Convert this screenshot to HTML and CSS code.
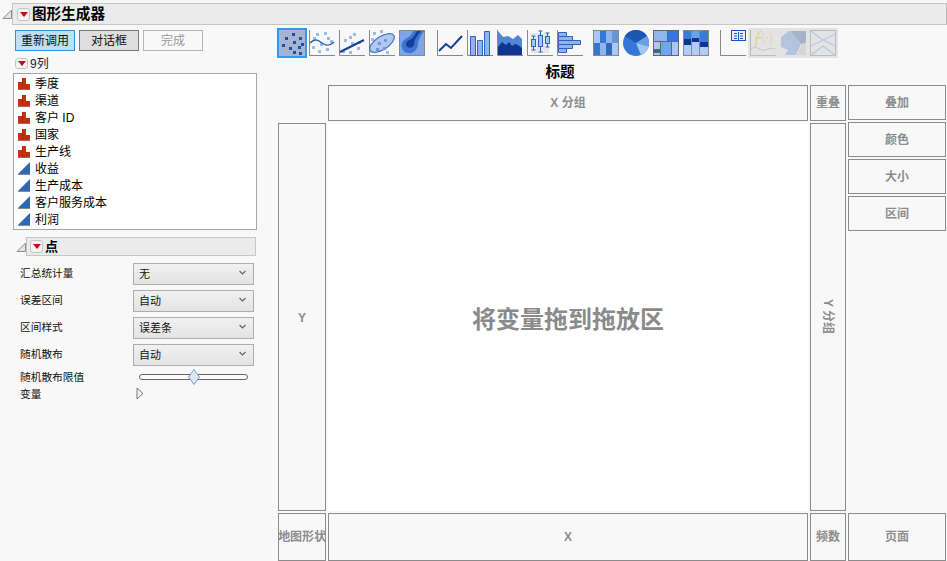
FILE: index.html
```html
<!DOCTYPE html>
<html lang="zh">
<head>
<meta charset="utf-8">
<title>图形生成器</title>
<link rel="stylesheet" href="styles.css">
</head>
<body>
<svg class="defs" width="0" height="0">
  <defs>
    <symbol id="tri-open" viewBox="0 0 10 10"><path d="M1 9.500 9.500 1v8.500z" fill="#e4e4e4" stroke="#8c8c8c"/></symbol>
    <symbol id="nom" viewBox="0 0 12 13"><path d="M0 5h4v7H0zM4 1h4v11H4zM8 7h4v5H8z" fill="#d42a10"/><path d="M4 1h1v11H4zM8 7h1v5H8z" fill="#a82a14"/><path d="M0 12h12v1H0z" fill="#9a6a60"/></symbol>
    <symbol id="con" viewBox="0 0 12 13"><path d="M0 12 12 0v12z" fill="#2f66b5"/><path d="M0 12h12v1H0z" fill="#888"/></symbol>
  </defs>
</svg>
<div class="app">
  <header class="title-row">
    <svg class="disc"><use href="#tri-open"/></svg>
    <div class="title-bar"><span class="menu"></span><span>图形生成器</span></div>
  </header>
  <div class="main">
    <aside class="left">
      <div class="actions">
        <button class="btn on">重新调用</button>
        <button class="btn mid">对话框</button>
        <button class="btn off">完成</button>
      </div>
      <div class="cols-head"><span class="menu small"></span><span>9列</span></div>
      <ul class="list">
        <li><svg class="ti"><use href="#nom"/></svg>季度</li>
        <li><svg class="ti"><use href="#nom"/></svg>渠道</li>
        <li><svg class="ti"><use href="#nom"/></svg>客户 ID</li>
        <li><svg class="ti"><use href="#nom"/></svg>国家</li>
        <li><svg class="ti"><use href="#nom"/></svg>生产线</li>
        <li><svg class="ti"><use href="#con"/></svg>收益</li>
        <li><svg class="ti"><use href="#con"/></svg>生产成本</li>
        <li><svg class="ti"><use href="#con"/></svg>客户服务成本</li>
        <li><svg class="ti"><use href="#con"/></svg>利润</li>
      </ul>
      <div class="points-head">
        <svg class="disc"><use href="#tri-open"/></svg>
        <div class="points-bar"><span class="menu"></span><span>点</span></div>
      </div>
      <div class="opts">
        <div class="opt"><label>汇总统计量</label><div class="sel"><span>无</span><svg class="chev" viewBox="0 0 7 5"><path d="M.5 1 3.500 4 6.500 1" fill="none" stroke="#666" stroke-width="1.200"/></svg></div></div>
        <div class="opt"><label>误差区间</label><div class="sel"><span>自动</span><svg class="chev" viewBox="0 0 7 5"><path d="M.5 1 3.500 4 6.500 1" fill="none" stroke="#666" stroke-width="1.200"/></svg></div></div>
        <div class="opt"><label>区间样式</label><div class="sel"><span>误差条</span><svg class="chev" viewBox="0 0 7 5"><path d="M.5 1 3.500 4 6.500 1" fill="none" stroke="#666" stroke-width="1.200"/></svg></div></div>
        <div class="opt"><label>随机散布</label><div class="sel"><span>自动</span><svg class="chev" viewBox="0 0 7 5"><path d="M.5 1 3.500 4 6.500 1" fill="none" stroke="#666" stroke-width="1.200"/></svg></div></div>
        <div class="opt slider-row"><label>随机散布限值</label><div class="track"><svg class="thumb" viewBox="0 0 12 16"><path d="M6 .5 11.500 8 6 15.500.5 8z" fill="#dbe7f5" stroke="#7f9ab8"/></svg></div></div>
        <div class="opt var-row"><label>变量</label><svg class="expand" viewBox="0 0 8 13"><path d="M1 1 7 6.500 1 12z" fill="#f4f4f4" stroke="#777"/></svg></div>
      </div>
    </aside>
    <section class="right">
      <div class="toolbar">
        <div class="tgroup">
          <button class="tool sel-tool"><svg viewBox="0 0 26 26"><rect width="26" height="26" fill="#a6b4d1"/><g fill="#1e4fb0"><rect x="13" y="3" width="3" height="3"/><rect x="6" y="7" width="3" height="3"/><rect x="20" y="7" width="3" height="3"/><rect x="14" y="11" width="3" height="3"/><rect x="22" y="13" width="3" height="3"/><rect x="3" y="14" width="3" height="3"/><rect x="19" y="16" width="3" height="3"/><rect x="10" y="17" width="3" height="3"/><rect x="14" y="21" width="3" height="3"/><rect x="20" y="22" width="3" height="3"/></g></svg></button>
          <button class="tool"><svg viewBox="0 0 26 26"><path d="M.5 0v25.500H26" fill="none" stroke="#888"/><g fill="#9dbbe8"><rect x="7" y="3" width="3" height="3"/><rect x="15" y="2" width="3" height="3"/><rect x="18" y="7" width="3" height="3"/><rect x="4" y="7" width="3" height="3"/><rect x="21" y="10" width="3" height="3"/><rect x="11" y="13" width="3" height="3"/><rect x="3" y="16" width="3" height="3"/><rect x="9" y="20" width="3" height="3"/><rect x="17" y="18" width="3" height="3"/></g><path d="M1 13c5-5 8-3 12 0s8 3 12-1" fill="none" stroke="#2d62b8" stroke-width="1.400"/></svg></button>
          <button class="tool"><svg viewBox="0 0 26 26"><path d="M.5 0v25.500H26" fill="none" stroke="#888"/><g fill="#9dbbe8"><rect x="5" y="9" width="3" height="3"/><rect x="10" y="6" width="3" height="3"/><rect x="14" y="3" width="3" height="3"/><rect x="12" y="12" width="3" height="3"/><rect x="19" y="11" width="3" height="3"/><rect x="3" y="20" width="3" height="3"/><rect x="10" y="21" width="3" height="3"/><rect x="18" y="17" width="3" height="3"/></g><path d="M1 22 25 10" fill="none" stroke="#123f9a" stroke-width="2"/></svg></button>
          <button class="tool"><svg viewBox="0 0 26 26"><path d="M.5 0v25.500H26" fill="none" stroke="#888"/><g fill="#9dbbe8"><rect x="4" y="2" width="3" height="3"/><rect x="11" y="0" width="3" height="3"/><rect x="14" y="5" width="3" height="3"/><rect x="2" y="8" width="3" height="3"/><rect x="17" y="21" width="3" height="3"/></g><ellipse cx="13" cy="13" rx="14" ry="6.500" transform="rotate(-33 13 13)" fill="#b3c8ee" stroke="#3b72cf" stroke-width="1.200"/><g fill="#6f97dc"><rect x="15" y="9" width="3" height="3"/><rect x="9" y="12" width="3" height="3"/><rect x="14" y="17" width="3" height="3"/><rect x="7" y="18" width="3" height="3"/></g></svg></button>
          <button class="tool"><svg viewBox="0 0 26 26"><rect width="26" height="26" fill="#7fa5e8"/><path d="M14 1H25C22 5 20 9 19 13 19 20 14 24 9 23 3 22 1 16 4 11 7 8 12 7 14 1z" fill="#3f74cc"/><path d="M18 1h4C19 5 15 9 15 14 15 19 7 19 7 14 7 10 13 10 15 6z" fill="#123f9a"/><path d="M.5.500h25v25H.5z" fill="none" stroke="#888"/></svg></button>
        </div>
        <div class="tgroup g2">
          <button class="tool"><svg viewBox="0 0 26 26"><path d="M.5 0v25.500H26" fill="none" stroke="#888"/><path d="M2 21l7-7 5 4L25 6" fill="none" stroke="#123f9a" stroke-width="2"/></svg></button>
          <button class="tool"><svg viewBox="0 0 26 26"><path d="M.5 0v25.500H26" fill="none" stroke="#888"/><g fill="#8fb4f0" stroke="#2d62b8"><path d="M3.500 6.500h5v19h-5z"/><path d="M10.500 10.500h5v15h-5z"/><path d="M17.500 1.500h5v24h-5z"/></g></svg></button>
          <button class="tool"><svg viewBox="0 0 26 26"><path d="M1 1l5 6 5-1 5 3 5-4 4 4v17H1z" fill="#4f86d6"/><path d="M1 17l4-5 4 3 3-3 3 4 3-2 3 1 4 3v7H1z" fill="#0f3590"/><path d="M.5 0v25.500H26" fill="none" stroke="#888"/></svg></button>
          <button class="tool"><svg viewBox="0 0 26 26"><path d="M.5 0v25.500H26" fill="none" stroke="#888"/><rect x="4" y="3" width="18" height="20" fill="#e3e6ec"/><g fill="none" stroke="#2d62b8"><path d="M6.500 6v14M4.500 6h4M4.500 20h4M13.500 1v21M11.500 1h4M11.500 22h4M20.500 3v14M18.500 3h4M18.500 17h4"/></g><g fill="#a8c6f5" stroke="#2d62b8"><rect x="4.500" y="9.500" width="4" height="7"/><rect x="11.500" y="5.500" width="4" height="11"/><rect x="18.500" y="6.500" width="4" height="7"/></g></svg></button>
          <button class="tool"><svg viewBox="0 0 26 26"><path d="M.5 0v25.500H26" fill="none" stroke="#888"/><g fill="#8fb4f0" stroke="#2d62b8"><path d="M1.500 2.500h8v4h-8z"/><path d="M1.500 6.500h14v4h-14z"/><path d="M1.500 10.500h22v4h-22z"/><path d="M1.500 14.500h14v4h-14z"/><path d="M1.500 18.500h8v4h-8z"/></g></svg></button>
        </div>
        <div class="tgroup g3">
          <button class="tool"><svg viewBox="0 0 26 26"><rect width="26" height="26" fill="#888"/><rect x="1" y="1" width="6" height="12" fill="#a9c8f7"/><rect x="7" y="1" width="6" height="12" fill="#3577d6"/><rect x="13" y="1" width="6" height="12" fill="#8fb4ee"/><rect x="19" y="1" width="6" height="12" fill="#6a94d8"/><rect x="1" y="13" width="6" height="12" fill="#3577d6"/><rect x="7" y="13" width="6" height="12" fill="#8fb4ee"/><rect x="13" y="13" width="6" height="12" fill="#3468bf"/><rect x="19" y="13" width="6" height="12" fill="#a9c8f7"/></svg></button>
          <button class="tool"><svg viewBox="0 0 26 26"><circle cx="13" cy="13" r="13" fill="#3577d6"/><path d="M13 13 2 6A13 13 0 0 1 24 6z" fill="#1e56b4"/><path d="M13 13 24 6A13 13 0 0 1 25.500 16.500z" fill="#6c9fe0"/><path d="M13 13 25.500 16.500A13 13 0 0 1 18 25z" fill="#a5c5f5"/></svg></button>
          <button class="tool"><svg viewBox="0 0 26 26"><rect width="26" height="26" fill="#666"/><rect x="1" y="1" width="13" height="10" fill="#8fb4ee"/><rect x="15" y="1" width="10" height="10" fill="#3577d6"/><rect x="1" y="12" width="6" height="7" fill="#a9c8f7"/><rect x="1" y="20" width="6" height="2" fill="#2d62b8"/><rect x="1" y="23" width="6" height="2" fill="#a9c8f7"/><rect x="8" y="12" width="10" height="13" fill="#6da5f8"/><rect x="19" y="12" width="6" height="13" fill="#a9c8f7"/></svg></button>
          <button class="tool"><svg viewBox="0 0 26 26"><rect width="26" height="26" fill="#888"/><rect x="1" y="1" width="7" height="24" fill="#b0cdf7"/><rect x="9" y="1" width="7" height="24" fill="#b0cdf7"/><rect x="17" y="1" width="8" height="24" fill="#b0cdf7"/><rect x="1" y="1" width="7" height="8" fill="#3b7bd8"/><rect x="1" y="9" width="7" height="6" fill="#0f3590"/><rect x="9" y="1" width="7" height="8" fill="#6fa0e6"/><rect x="9" y="8" width="7" height="4" fill="#0f3590"/><rect x="17" y="1" width="8" height="11" fill="#3b7bd8"/><rect x="17" y="12" width="8" height="5" fill="#0f3590"/></svg></button>
        </div>
        <div class="tgroup g4">
          <button class="tool"><svg viewBox="0 0 26 26"><path d="M.5 0v25.500H26" fill="none" stroke="#888"/><rect x="11.500" y=".5" width="14" height="10" fill="#e8effb" stroke="#1c4fc0"/><path d="M14 3.500h3M14 6h3M14 8.500h3M20 3.500h3M20 6h3M20 8.500h3M18.500 2v8" stroke="#1c4fc0" fill="none"/></svg></button>
        </div>
        <div class="tgroup dis">
          <button class="tool"><svg viewBox="0 0 26 26"><path d="M.5 0v25.500H26" fill="none" stroke="#bbb"/><path d="M1 19c6-5 9 3 14 1s6-2 10-1" fill="none" stroke="#b8c8e4"/><path d="M4 17c3 0 2-5 3-9 1-5 2-7 5-6M5 8h6" fill="none" stroke="#e3d59e" stroke-width="1.800"/><circle cx="17" cy="8" r="1" fill="#e3d59e"/><path d="M14 3c-2 3-2 7 0 10M20 3c2 3 2 7 0 10" fill="none" stroke="#e3d59e"/></svg></button>
          <button class="tool"><svg viewBox="0 0 26 26"><path d="M1 7l8-6h8l-1 7 5 6-5 11H5l3-5-7-3z" fill="#b4c4de"/><path d="M11 1h15v12l-5 1-5-6z" fill="#a7b2c8"/><path d="M22 14h4v11h-9z" fill="#d5d5d5"/></svg></button>
          <button class="tool"><svg viewBox="0 0 26 26"><rect x=".5" y=".5" width="25" height="25" fill="none" stroke="#bbb"/><path d="M1 1l12 9 12-6M1 16l12-6 12 6M1 25l12-9 12 9" fill="none" stroke="#b8c8e4" stroke-width="1.200"/></svg></button>
        </div>
      </div>
      <div class="chart-title">标题</div>
      <div class="zones">
        <div class="z x-group">X 分组</div>
        <div class="z overlap">重叠</div>
        <div class="side">
          <div class="z">叠加</div>
          <div class="z">颜色</div>
          <div class="z">大小</div>
          <div class="z">区间</div>
        </div>
        <div class="z y-zone">Y</div>
        <div class="canvas">将变量拖到拖放区</div>
        <div class="z y-group"><span>Y 分组</span></div>
        <div class="z map">地图形状</div>
        <div class="z x-zone">X</div>
        <div class="z freq">频数</div>
        <div class="z page">页面</div>
      </div>
    </section>
  </div>
</div>
</body>
</html>
```
FILE: styles.css
```css
* { box-sizing: border-box; }
html, body { margin: 0; height: 100%; overflow: hidden; }
body {
  background: #f8f8f8;
  color: #000;
  font: 12px/1 "Liberation Sans", "Noto Sans CJK SC", sans-serif;
}
.defs { position: absolute; }
.app { width: 947px; height: 561px; padding-top: 3px; }

.title-row { display: flex; align-items: center; height: 22px; padding-left: 2px; }
.disc { width: 10px; height: 10px; flex: none; }
.title-bar {
  flex: 1;
  height: 22px;
  display: flex;
  align-items: center;
  gap: 2px;
  padding-left: 4px;
  background: #ebebeb;
  border: 1px solid #c6c6c6;
  border-right-color: #bbb;
  font-size: 14.6px;
  font-weight: 700;
}
.menu {
  position: relative;
  flex: none;
  width: 13px;
  height: 13px;
  background: #f4f4f4;
  border: 1px solid #c4c4c4;
  border-radius: 3px;
}
.menu::after {
  content: "";
  position: absolute;
  left: 1.500px;
  top: 3px;
  border-style: solid;
  border-width: 5px 4px 0;
  border-color: #d00018 transparent transparent;
}
.menu.small { height: 11px; }
.menu.small::after { top: 2px; }

.main { display: flex; }
.left { width: 278px; flex: none; padding-top: 5px; }
.actions { display: flex; gap: 4px; padding-left: 15px; }
.btn {
  width: 60px;
  height: 21px;
  padding: 0;
  font: inherit;
  border: 1px solid #777;
  color: #111;
}
.btn.on { background: #bde0f8; border-color: #3f8fcc; }
.btn.mid { background: #dedede; }
.btn.off { background: #f8f8f8; border-color: #b4b4b4; color: #999; }

.cols-head { display: flex; align-items: center; gap: 2px; height: 13px; margin-top: 6px; padding-left: 15px; color: #222; }
.list {
  list-style: none;
  width: 244px;
  height: 157px;
  margin: 3px 0 0 13px;
  padding: 1px 0 0 4px;
  background: #fff;
  border: 1px solid #a6a6a6;
}
.list li { display: flex; align-items: center; height: 17px; }
.ti { width: 12px; height: 13px; margin-right: 5px; flex: none; }

.points-head { display: flex; align-items: center; margin: 7px 0 0 16px; }
.points-bar {
  width: 230px;
  height: 19px;
  display: flex;
  align-items: center;
  gap: 2px;
  padding-left: 3px;
  background: #ebebeb;
  border: 1px solid #c6c6c6;
  font-size: 13px;
  font-weight: 700;
}

.opts { padding: 7px 0 0 20px; font-size: 10.7px; color: #111; }
.opt { display: flex; align-items: center; height: 22px; margin-bottom: 5px; }
.opt label { width: 113px; flex: none; position: relative; top: -1px; }
.sel {
  width: 121px;
  height: 22px;
  display: flex;
  align-items: center;
  justify-content: space-between;
  padding: 0 7px 0 5px;
  background: linear-gradient(#f1f1f1, #e3e3e3);
  border: 1px solid #adadad;
  font-size: 11px;
}
.chev { width: 7px; height: 5px; margin-top: -4px; }
.slider-row { height: 14px; margin-bottom: 0; }
.slider-row label { top: -1px; width: 119px; }
.track {
  position: relative;
  width: 109px;
  height: 6px;
  margin-top: -2px;
  background: #fbfbfb;
  border: 1px solid #666;
  border-radius: 3px;
}
.thumb { position: absolute; left: 48px; top: -6px; width: 12px; height: 16px; }
.var-row { height: 16px; margin: 0; }
.var-row label { width: 116px; top: 1px; }
.expand { width: 8px; height: 13px; }

.right { width: 669px; flex: none; padding-top: 3px; }
.toolbar { display: flex; height: 30px; }
.tgroup { display: flex; }
.g2 { margin-left: 8px; }
.g3 { margin-left: 6px; }
.g4 { margin-left: 7px; }
.dis { background: #e3e3e3; }
.tool {
  width: 30px;
  height: 30px;
  padding: 2px;
  background: none;
  border: 0;
  display: flex;
}
.tool svg { width: 26px; height: 26px; display: block; flex: none; }
.sel-tool { border: 2px solid #2f9bf0; padding: 0; background: #a6b4d1; margin-left: -1px; }
.chart-title { height: 27px; padding: 7px 105px 0 0; text-align: center; font-size: 14.6px; font-weight: 700; }

.zones {
  display: grid;
  grid-template-columns: 48px 480px 36px 98px;
  grid-template-rows: 36px 388px 48px;
  column-gap: 2px;
  row-gap: 2px;
}
.z {
  display: flex;
  align-items: center;
  justify-content: center;
  background: #f8f8f8;
  border: 1px solid #8c8c8c;
  color: #8c8c8c;
  font-weight: 700;
  white-space: nowrap;
}
.x-group { grid-column: 2; grid-row: 1; }
.overlap { grid-column: 3; grid-row: 1; }
.side {
  grid-column: 4;
  grid-row: 1 / 3;
  display: flex;
  flex-direction: column;
  gap: 2px;
}
.side .z { height: 35px; }
.y-zone { grid-column: 1; grid-row: 2; padding-top: 2px; }
.canvas {
  grid-column: 2;
  grid-row: 2;
  margin-top: -1px;
  padding-top: 6px;
  display: flex;
  align-items: center;
  justify-content: center;
  background: #fff;
  color: #8a8a8a;
  font-size: 24px;
  font-weight: 700;
}
.y-group { grid-column: 3; grid-row: 2; }
.y-group span { writing-mode: vertical-rl; text-orientation: sideways; }
.map { grid-column: 1; grid-row: 3; letter-spacing: -.1px; overflow: hidden; }
.x-zone { grid-column: 2; grid-row: 3; }
.freq { grid-column: 3; grid-row: 3; }
.page { grid-column: 4; grid-row: 3; }
```
